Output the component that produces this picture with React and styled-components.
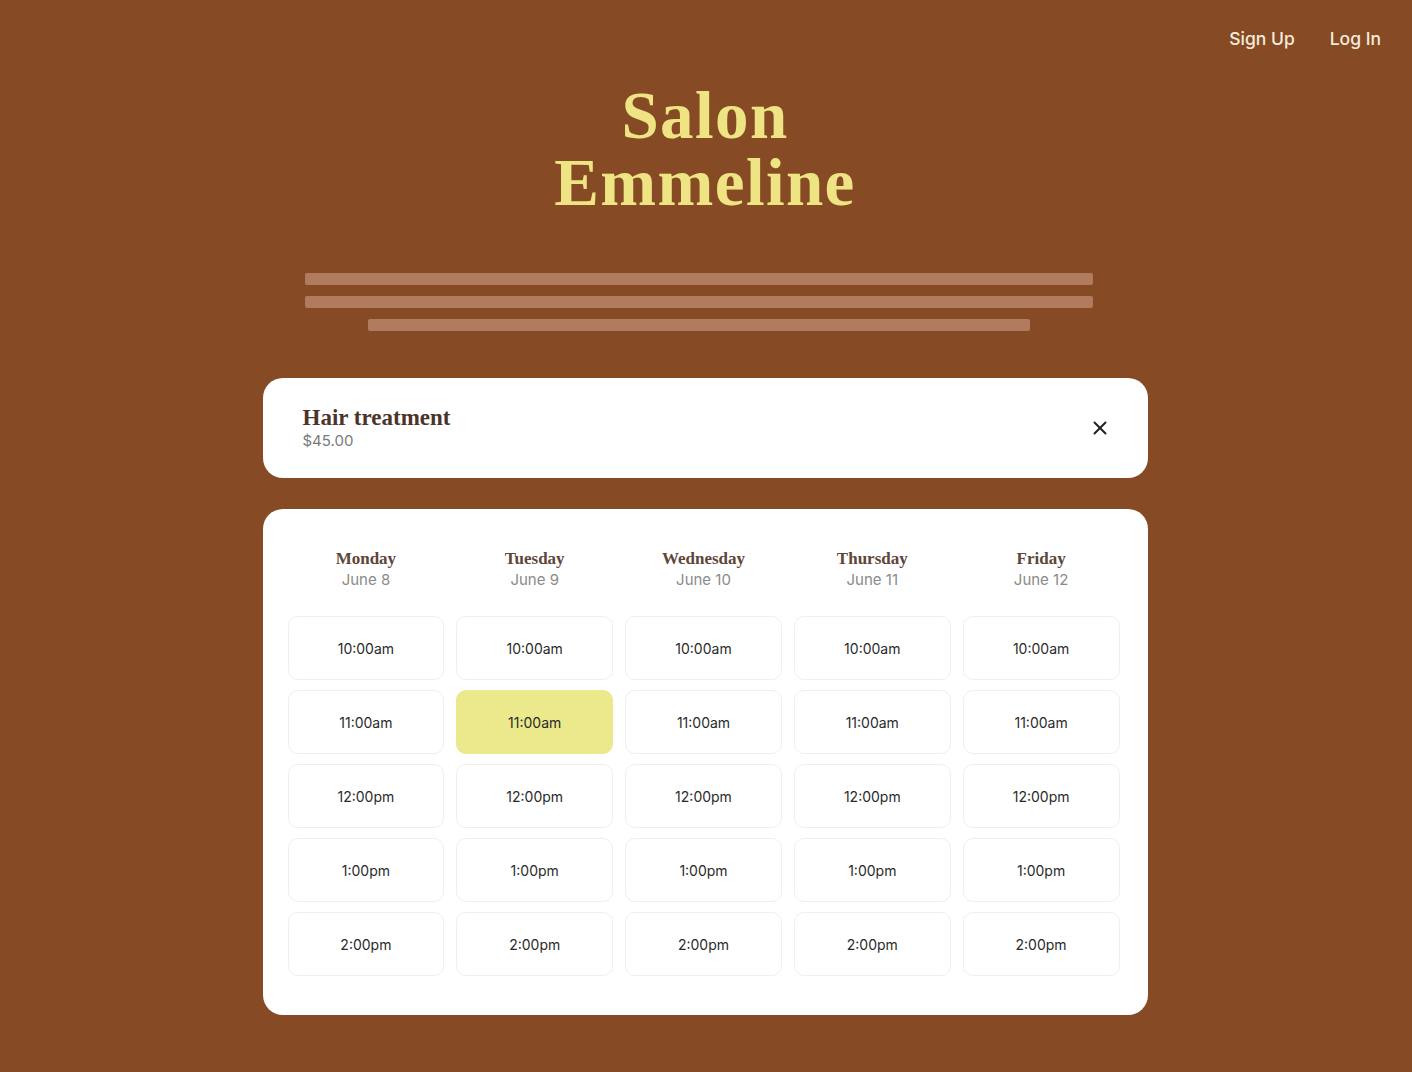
import React, { useState } from "react";
import styled, { createGlobalStyle } from "styled-components";
import { X } from "lucide-react";

const GlobalStyle = createGlobalStyle`
  html, body {
    margin: 0;
    padding: 0;
    background: #864a24;
  }
  body {
    font-family: Inter, "Noto Sans", sans-serif;
  }
`;

const serif = `"Liberation Serif", "DejaVu Serif", serif`;

const Page = styled.div`
  min-height: 1072px;
  background: #864a24;
  display: flex;
  flex-direction: column;
  align-items: center;
  padding-right: 2px;
`;

const Nav = styled.nav`
  align-self: stretch;
  display: flex;
  justify-content: flex-end;
  gap: 35px;
  padding: 27px 29px 0 0;
  height: 24px;
`;

const NavLink = styled.a`
  color: #f6ecdc;
  font-size: 17.5px;
  font-weight: 500;
  line-height: 24px;
  text-decoration: none;
  cursor: pointer;
`;

const Title = styled.h1`
  margin: 31px 0 0;
  font-family: ${serif};
  font-weight: 700;
  font-size: 67px;
  line-height: 67px;
  letter-spacing: 1.4px;
  color: #eee484;
  text-align: center;
`;

const Lines = styled.div`
  margin-top: 57px;
  padding-right: 12px;
  display: flex;
  flex-direction: column;
  align-items: center;
  gap: 11px;
`;

const Line = styled.div`
  width: ${(p) => p.$w}px;
  height: 12px;
  border-radius: 2px;
  background: #b17b5e;
`;

const Card = styled.section`
  width: 885px;
  box-sizing: border-box;
  background: #fff;
  border-radius: 20px;
`;

const ServiceCard = styled(Card)`
  margin-top: 47px;
  height: 100px;
  padding: 0 40px;
  display: flex;
  align-items: center;
  justify-content: space-between;
`;

const ServiceName = styled.div`
  font-family: ${serif};
  font-weight: 700;
  font-size: 23px;
  color: #4b342a;
  line-height: 26px;
`;

const Price = styled.div`
  font-size: 15px;
  color: #7a7a7a;
  line-height: 20px;
`;

const CloseButton = styled.button`
  border: none;
  background: none;
  padding: 0;
  margin-right: -3px;
  display: flex;
  color: #222;
  cursor: pointer;
`;

const ScheduleCard = styled(Card)`
  margin-top: 31px;
  padding: 39px 28px 39px 25px;
`;

const Grid = styled.div`
  display: grid;
  grid-template-columns: repeat(5, 1fr);
  column-gap: 12px;
  row-gap: 10px;
`;

const DayHead = styled.div`
  text-align: center;
  padding-bottom: 16px;
`;

const DayName = styled.div`
  font-family: ${serif};
  font-weight: 700;
  font-size: 17px;
  line-height: 22px;
  color: #5e4639;
`;

const DayDate = styled.div`
  font-size: 15px;
  line-height: 20px;
  color: #8a8a8a;
`;

const Slot = styled.button`
  height: 64px;
  border: 1px solid ${(p) => (p.$active ? "#ebe98b" : "#efefef")};
  border-radius: 10px;
  background: ${(p) => (p.$active ? "#ebe98b" : "#fff")};
  font-family: Inter, "Noto Sans", sans-serif;
  font-size: 14px;
  color: #2a2a2a;
  cursor: pointer;
`;

const days = [
  ["Monday", "June 8"],
  ["Tuesday", "June 9"],
  ["Wednesday", "June 10"],
  ["Thursday", "June 11"],
  ["Friday", "June 12"],
];

const times = ["10:00am", "11:00am", "12:00pm", "1:00pm", "2:00pm"];

export default function App() {
  const [picked, setPicked] = useState("1-1");

  return (
    <Page>
      <GlobalStyle />
      <Nav>
        <NavLink>Sign Up</NavLink>
        <NavLink>Log In</NavLink>
      </Nav>
      <Title>
        Salon
        <br />
        Emmeline
      </Title>
      <Lines>
        <Line $w={788} />
        <Line $w={788} />
        <Line $w={662} />
      </Lines>
      <ServiceCard>
        <div>
          <ServiceName>Hair treatment</ServiceName>
          <Price>$45.00</Price>
        </div>
        <CloseButton aria-label="close">
          <X size={22} strokeWidth={2.2} />
        </CloseButton>
      </ServiceCard>
      <ScheduleCard>
        <Grid>
          {days.map(([name, date]) => (
            <DayHead key={name}>
              <DayName>{name}</DayName>
              <DayDate>{date}</DayDate>
            </DayHead>
          ))}
          {times.map((t, r) =>
            days.map((d, c) => {
              const id = `${r}-${c}`;
              return (
                <Slot key={id} $active={picked === id} onClick={() => setPicked(id)}>
                  {t}
                </Slot>
              );
            })
          )}
        </Grid>
      </ScheduleCard>
    </Page>
  );
}
